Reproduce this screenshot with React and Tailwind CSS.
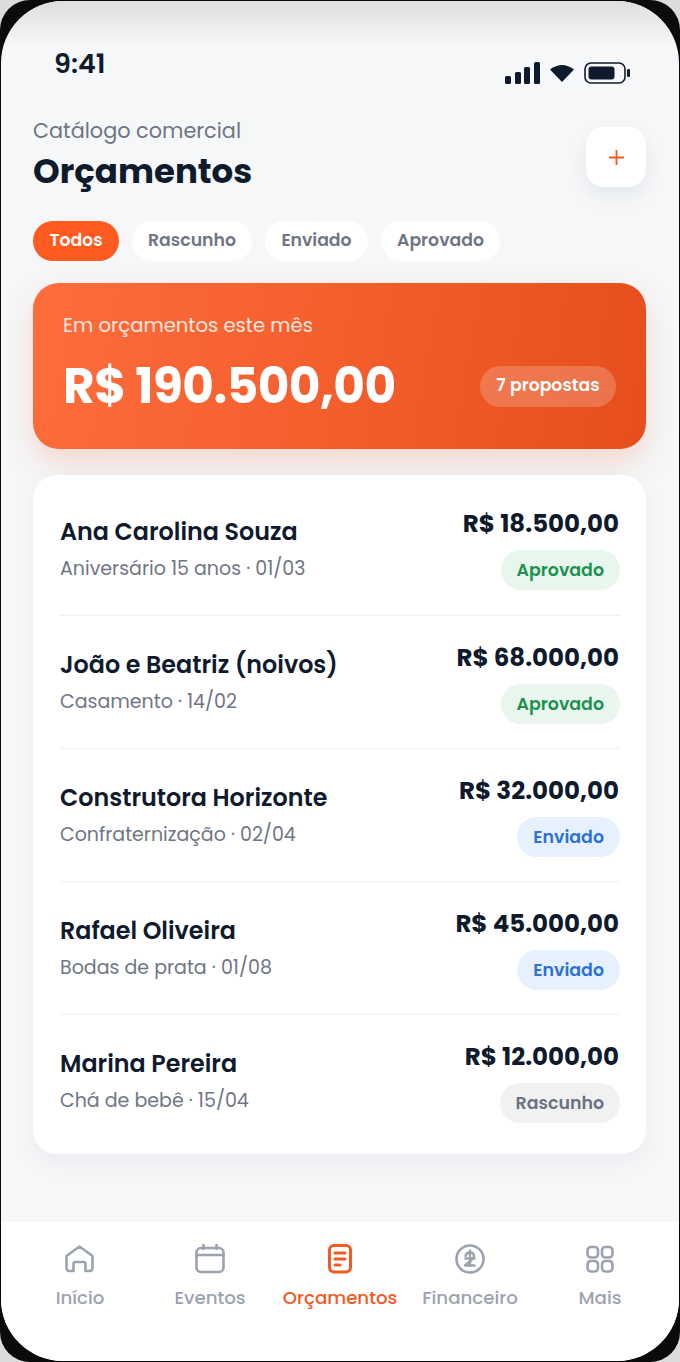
import React from 'react';

const font = "font-['Poppins','Inter','Noto_Sans',sans-serif]";

const quotes = [
  { name: 'Ana Carolina Souza', info: 'Aniversário 15 anos · 01/03', value: 'R$ 18.500,00', status: 'Aprovado' },
  { name: 'João e Beatriz (noivos)', info: 'Casamento · 14/02', value: 'R$ 68.000,00', status: 'Aprovado' },
  { name: 'Construtora Horizonte', info: 'Confraternização · 02/04', value: 'R$ 32.000,00', status: 'Enviado' },
  { name: 'Rafael Oliveira', info: 'Bodas de prata · 01/08', value: 'R$ 45.000,00', status: 'Enviado' },
  { name: 'Marina Pereira', info: 'Chá de bebê · 15/04', value: 'R$ 12.000,00', status: 'Rascunho' },
];

const badgeStyles = {
  Aprovado: 'bg-[#e8f6ee] text-[#1c9150]',
  Enviado: 'bg-[#e7f0fd] text-[#2b71d6]',
  Rascunho: 'bg-[#f0f1f3] text-[#6b7280]',
};

function HomeIcon() {
  return (
    <svg width="32" height="32" viewBox="0 0 32 32" fill="none" stroke="currentColor" strokeWidth="2.6" strokeLinejoin="round" strokeLinecap="round">
      <path d="M2.5 12 L15.5 2.5 L28.5 12 V24 Q28.5 27 25.5 27 H21.5 V20 Q21.5 18 19.5 18 H11.5 Q9.5 18 9.5 20 V27 H5.5 Q2.5 27 2.5 24 Z" />
    </svg>
  );
}

function CalendarIcon() {
  return (
    <svg width="32" height="32" viewBox="0 0 32 32" fill="none" stroke="currentColor" strokeWidth="2.6" strokeLinecap="round">
      <rect x="2.5" y="4" width="27" height="24" rx="4.5" />
      <path d="M2.5 11 H29.5 M9.5 1 V5 M22.5 1 V5" />
    </svg>
  );
}

function DocIcon() {
  return (
    <svg width="32" height="32" viewBox="0 0 32 32" fill="none" stroke="currentColor" strokeWidth="3" strokeLinecap="round">
      <rect x="5.5" y="1.5" width="21" height="26.5" rx="4.5" />
      <path d="M11 9 H21 M11 15 H21 M11 21 H16" />
    </svg>
  );
}

function CoinIcon() {
  return (
    <svg width="32" height="32" viewBox="0 0 32 32" fill="none" stroke="currentColor" strokeWidth="2.6" strokeLinecap="round" strokeLinejoin="round">
      <circle cx="16" cy="15" r="13.5" />
      <path d="M11.5 12 C12 9.5 14 8.5 16 8.5 C18.5 8.5 20 10 20 12 C20 15 15 18 11 21.5 H20.5" strokeWidth="2.4" />
      <path d="M16 6.5 V21.5 M11.5 14.5 H20.5" strokeWidth="2.4" />
    </svg>
  );
}

function GridIcon() {
  return (
    <svg width="32" height="32" viewBox="0 0 32 32" fill="none" stroke="currentColor" strokeWidth="2.6">
      <rect x="3.5" y="3" width="10.5" height="10.5" rx="3.5" />
      <rect x="18" y="3" width="10.5" height="10.5" rx="3.5" />
      <rect x="3.5" y="17" width="10.5" height="10.5" rx="3.5" />
      <rect x="18" y="17" width="10.5" height="10.5" rx="3.5" />
    </svg>
  );
}

const tabs = [
  { label: 'Início', icon: <HomeIcon /> },
  { label: 'Eventos', icon: <CalendarIcon /> },
  { label: 'Orçamentos', icon: <DocIcon />, active: true },
  { label: 'Financeiro', icon: <CoinIcon /> },
  { label: 'Mais', icon: <GridIcon /> },
];

function StatusIcons() {
  return (
    <div className="flex items-center gap-[10px] text-[#0f1b2d]">
      <svg width="35" height="22" viewBox="0 0 35 22" fill="currentColor">
        <rect x="0" y="14" width="6" height="8" rx="1.5" />
        <rect x="10" y="10" width="6" height="12" rx="1.5" />
        <rect x="19" y="5" width="6" height="17" rx="1.5" />
        <rect x="29" y="0" width="6" height="22" rx="1.5" />
      </svg>
      <svg width="24" height="18" viewBox="0 0 24 18" fill="currentColor">
        <path d="M0 5.5 Q12 -3.5 24 5.5 L12 18 Z" />
      </svg>
      <svg width="46" height="22" viewBox="0 0 46 22" fill="none">
        <rect x="1" y="1" width="40" height="20" rx="6" stroke="currentColor" strokeWidth="1.6" />
        <rect x="4.5" y="4.5" width="26" height="13" rx="3" fill="currentColor" />
        <rect x="43" y="7" width="3" height="8" rx="1.2" fill="currentColor" />
      </svg>
    </div>
  );
}

export default function App() {
  return (
    <div className={`${font} w-[680px] h-[1362px] bg-[#dcdcde] overflow-hidden`}>
      <div className="w-full h-full rounded-[30px] bg-[#0b0b0d] pt-[1px] pl-[1px]">
        <div className="w-[678px] h-[1360px] rounded-[62px] bg-[#f5f7f9] overflow-hidden flex flex-col relative">
          <div className="absolute top-0 left-0 right-0 h-[45px] bg-gradient-to-b from-[#dcdee0] to-transparent" />

          {/* Status bar */}
          <div className="relative flex justify-between items-start pl-[53px] pr-[49px] pt-[45px] h-[108px]">
            <span className="text-[27px] leading-[36px] font-semibold text-[#0f1b2d]">9:41</span>
            <div className="pt-[16px]">
              <StatusIcons />
            </div>
          </div>

          {/* Header */}
          <div className="flex justify-between items-start pl-[32px] pr-[33px] pt-[8px]">
            <div>
              <div className="text-[20.8px] leading-[28px] text-[#6f7683]">Catálogo comercial</div>
              <div className="text-[34px] leading-[50px] font-bold text-[#0f1b2d] mt-[1px]">Orçamentos</div>
            </div>
            <button className="w-[60px] h-[60px] mt-[10px] rounded-[18px] bg-white shadow-[0_8px_20px_rgba(15,27,45,0.07)] flex items-center justify-center text-[#f15a22]">
              <svg width="15" height="15" viewBox="0 0 16 16" stroke="currentColor" strokeWidth="2">
                <path d="M8 0 V16 M0 8 H16" />
              </svg>
            </button>
          </div>

          {/* Filters */}
          <div className="flex gap-[13px] pl-[32px] mt-[25px] text-[17.3px] font-semibold">
            <div className="h-[40px] w-[86px] rounded-full bg-[#ff5a1f] text-white flex items-center justify-center">Todos</div>
            <div className="h-[40px] w-[120px] rounded-full bg-white text-[#6f7683] flex items-center justify-center">Rascunho</div>
            <div className="h-[40px] w-[103px] rounded-full bg-white text-[#6f7683] flex items-center justify-center">Enviado</div>
            <div className="h-[40px] w-[119px] rounded-full bg-white text-[#6f7683] flex items-center justify-center">Aprovado</div>
          </div>

          {/* Total */}
          <div className="ml-[32px] mr-[33px] mt-[22px] h-[166px] rounded-[26px] bg-[linear-gradient(100deg,#ff6d3d,#e64f1b)] shadow-[0_14px_30px_rgba(241,90,34,0.2)] pl-[30px] pr-[30px] pt-[28px] text-white">
            <div className="text-[19.6px] leading-[28px] text-white/85">Em orçamentos este mês</div>
            <div className="flex justify-between items-center mt-[15px]">
              <div className="text-[48.6px] leading-[64px] font-bold tracking-[-0.55px]">R$ 190.500,00</div>
              <div className="h-[41px] w-[136px] rounded-full bg-white/20 flex items-center justify-center text-[17.3px] font-semibold">7 propostas</div>
            </div>
          </div>

          {/* List */}
          <div className="ml-[32px] mr-[33px] mt-[26px] rounded-[24px] bg-white shadow-[0_8px_24px_rgba(15,27,45,0.05)] pl-[27px] pr-[26px] py-[7px]">
            {quotes.map((q, i) => (
              <div key={q.name} className={`flex justify-between h-[133px] ${i > 0 ? 'border-t border-[#f0f1f3]' : ''}`}>
                <div className={i > 0 ? 'pt-[31px]' : 'pt-[32px]'}>
                  <div className="text-[23.8px] leading-[36px] font-semibold text-[#0f1b2d]">{q.name}</div>
                  <div className="text-[19px] leading-[30px] text-[#6f7683] mt-[4px]">{q.info}</div>
                </div>
                <div className="flex flex-col items-end pt-[24px]">
                  <div className="text-[24.5px] leading-[36px] font-bold text-[#0f1b2d] mr-[1px]">{q.value}</div>
                  <div className={`mt-[8px] h-[40px] px-[16px] rounded-full flex items-center text-[17.4px] font-semibold ${badgeStyles[q.status]}`}>{q.status}</div>
                </div>
              </div>
            ))}
          </div>

          <div className="flex-1" />

          {/* Bottom nav */}
          <div className="h-[139px] bg-white flex pt-[22px] px-[14px]">
            {tabs.map((t) => (
              <div key={t.label} className={`flex-1 flex flex-col items-center gap-[8px] ${t.active ? 'text-[#f15a22]' : 'text-[#9ca3af]'}`}>
                {t.icon}
                <span className="text-[18.2px] leading-[28px] font-medium whitespace-nowrap">{t.label}</span>
              </div>
            ))}
          </div>
        </div>
      </div>
    </div>
  );
}
